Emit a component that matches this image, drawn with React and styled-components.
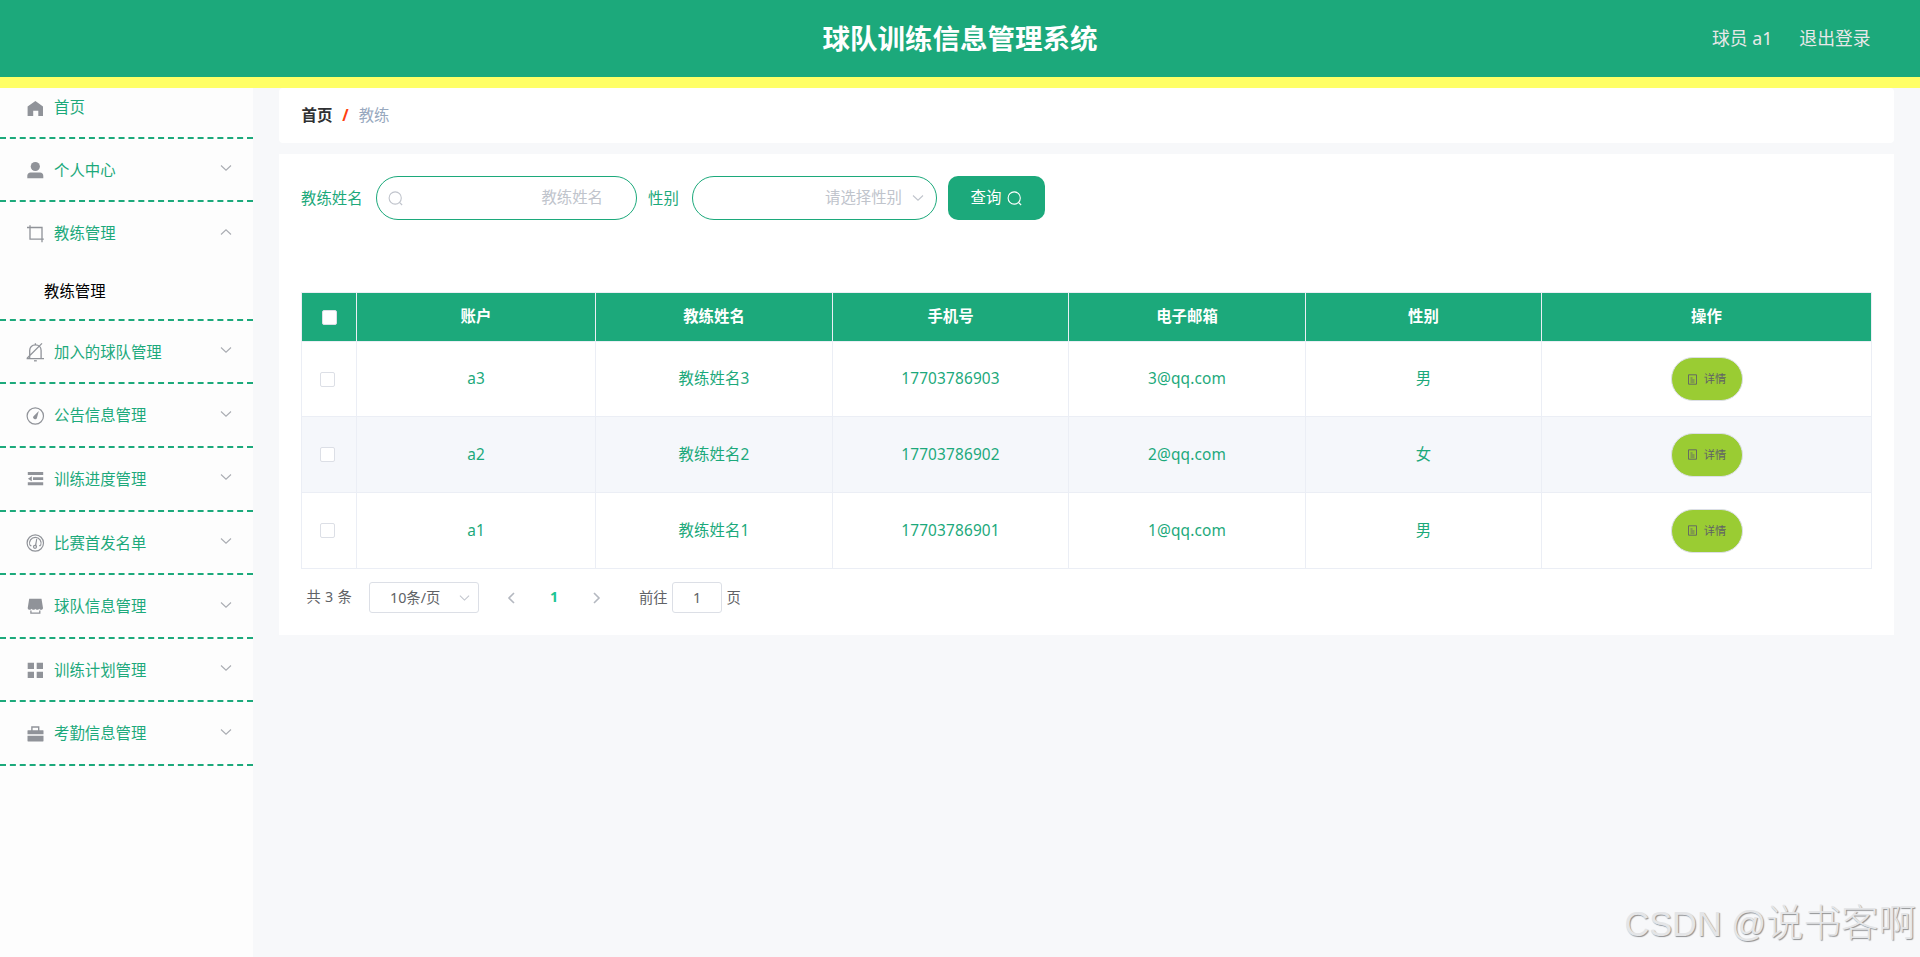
import React from "react";
import styled, { createGlobalStyle } from "styled-components";

const GREEN = "#1ca97b";
const LINE = "#ebeef5";

const GlobalStyle = createGlobalStyle`
  *, *::before, *::after { box-sizing: border-box; }
  body {
    margin: 0;
    background: #f7f8fa;
    font-family: "Noto Sans", "Noto Sans CJK SC", sans-serif;
    font-size: 15.4px;
    color: #606266;
  }
  button, input { font-family: inherit; }
`;

const Page = styled.div`
  display: flex;
  flex-direction: column;
  height: 957px;
  overflow: hidden;
  position: relative;
`;

const Header = styled.header`
  flex: none;
  display: grid;
  grid-template-columns: 1fr auto 1fr;
  align-items: center;
  height: 88px;
  padding: 0 49.5px;
  background: ${GREEN};
  border-bottom: 11px solid #ffff66;
`;

const Title = styled.h1`
  grid-column: 2;
  margin: 1px 0 0;
  font-size: 27.5px;
  line-height: 44px;
  font-weight: 700;
  color: #fff;
`;

const UserLinks = styled.div`
  display: flex;
  justify-content: flex-end;
  gap: 27px;
  padding-bottom: 1px;
  font-size: 17.8px;
  line-height: 30px;
  color: #e8e8e8;
`;

const Body = styled.div`
  flex: 1;
  display: flex;
  min-height: 0;
`;

const Sidebar = styled.nav`
  flex: none;
  width: 253px;
  background: #fdfdfd;
`;

const MenuItem = styled.div`
  border-bottom: 2px dashed ${GREEN};
`;

const MenuRow = styled.div`
  display: flex;
  align-items: center;
  height: ${(p) => (p.$first ? "48.6px" : "61.6px")};
  padding: ${(p) => (p.$first ? "0 22px 9px" : "1.4px 22px 0")};
  color: ${GREEN};
`;

const MenuIcon = styled.svg`
  flex: none;
  width: 20px;
  height: 20px;
  margin: 0 9px 0 3px;
  fill: #909399;
  stroke: none;
`;

const MenuText = styled.span`
  flex: 1;
  padding-top: ${(p) => (p.$first ? 0 : "1.2px")};
  line-height: 22px;
`;

const Arrow = styled.svg`
  flex: none;
  width: ${(p) => p.$w || 12}px;
  height: 8px;
  fill: none;
  stroke: ${(p) => p.$color || "#a9acb2"};
  stroke-width: 1.1;
  transform: ${(p) => (p.$up ? "rotate(180deg)" : "none")};
`;

const MenuArrow = styled(Arrow)`
  margin: -4px -1px 0 0;
`;

const SubItem = styled.div`
  height: 55px;
  padding-left: 44px;
  line-height: 56px;
  color: #000;
`;

const Main = styled.main`
  flex: 1;
  padding: 0 26px;
`;

const Breadcrumb = styled.div`
  display: flex;
  align-items: center;
  height: 55px;
  margin-bottom: 11px;
  padding: 0 22.5px;
  background: #fff;
  border-radius: 4px;
  line-height: 22px;
`;

const CrumbHome = styled.span`
  font-weight: 700;
  color: #303133;
`;

const CrumbSlash = styled.span`
  margin: 0 10px;
  font-weight: 700;
  color: #ff4010;
`;

const CrumbCurrent = styled.span`
  color: #97a8be;
`;

const Card = styled.section`
  height: 481px;
  padding: 22px;
  background: #fff;
`;

const SearchForm = styled.div`
  display: flex;
  align-items: center;
  height: 44px;
  margin-bottom: 72px;
`;

const FieldLabel = styled.label`
  width: ${(p) => p.$w}px;
  padding-top: 1px;
  line-height: 22px;
  color: ${GREEN};
`;

const Field = styled.div`
  display: flex;
  align-items: center;
  justify-content: space-between;
  width: ${(p) => p.$w}px;
  height: 44px;
  margin-right: 11px;
  padding: ${(p) => p.$pad};
  border: 1px solid ${GREEN};
  border-radius: 22px;
`;

const Placeholder = styled.span`
  flex: 1;
  margin-right: ${(p) => p.$gap || 0}px;
  text-align: right;
  line-height: 22px;
  color: #c0c4cc;
`;

const LineIcon = styled.svg`
  flex: none;
  width: ${(p) => p.$size}px;
  height: ${(p) => p.$size}px;
  fill: none;
  stroke: ${(p) => p.$color};
  stroke-width: 1.1;
`;

const QueryButton = styled.button`
  display: flex;
  align-items: center;
  gap: 5.5px;
  width: 97px;
  height: 44px;
  padding: 0 22.5px;
  border: 0;
  border-radius: 10px;
  background: ${GREEN};
  color: #fff;
  font-size: 15.4px;
  line-height: 22px;
`;

const Table = styled.table`
  width: 1571px;
  table-layout: fixed;
  border: 1px solid ${LINE};
  border-bottom: 0;
  border-collapse: separate;
  border-spacing: 0;
`;

const HeadCell = styled.th`
  height: 49px;
  padding: 0;
  background: ${GREEN};
  border-bottom: 1px solid ${LINE};
  border-right: 1px solid ${LINE};
  color: #fff;
  font-weight: 700;
  line-height: 22px;
  &:last-child { border-right: 0; }
`;

const Row = styled.tr`
  height: ${(p) => p.$h}px;
  background: ${(p) => (p.$striped ? "#f5f7fb" : "#fff")};
`;

const Cell = styled.td`
  padding: 0;
  border-bottom: 1px solid ${LINE};
  border-right: 1px solid ${LINE};
  color: ${GREEN};
  text-align: center;
  letter-spacing: 0.15px;
  line-height: 22px;
  &:last-child { border-right: 0; }
`;

const CheckBox = styled.span`
  display: block;
  width: 15px;
  height: 15px;
  margin: ${(p) => (p.$head ? "0 0 0 20px" : "0 0 0 18px")};
  background: #fff;
  border: 1px solid #dcdfe6;
  border-radius: 2px;
`;

const DetailButton = styled.button`
  display: flex;
  align-items: center;
  justify-content: center;
  gap: 6px;
  width: 72px;
  height: 44px;
  margin: 0 0 0 128.5px;
  padding: 0;
  background: #9acc33;
  border: 1px solid #dcdfe6;
  border-radius: 22px;
  color: #606266;
  font-size: 11.2px;
  line-height: 16px;
`;

const Pagination = styled.div`
  display: flex;
  align-items: center;
  height: 31px;
  margin-top: 13px;
  padding-left: 5.5px;
  font-size: 14.3px;
  line-height: 22px;
`;

const Total = styled.span`
  width: 62.5px;
  padding-bottom: 2px;
  word-spacing: 0.6px;
`;

const PageSize = styled.div`
  display: flex;
  align-items: center;
  width: 110px;
  height: 31px;
  padding: 1px 8px 0 20px;
  border: 1px solid #dcdfe6;
  border-radius: 3px;
  justify-content: space-between;
`;

const Pager = styled.div`
  display: flex;
  align-items: center;
  justify-content: space-between;
  width: 96px;
  margin: 0 37px 0 27px;
`;

const CurrentPage = styled.span`
  padding-bottom: 2px;
  font-weight: 700;
  color: #1cc493;
`;

const JumpInput = styled.span`
  width: 50px;
  height: 31px;
  margin: 0 5px 0 4px;
  border: 1px solid #dcdfe6;
  border-radius: 3px;
  text-align: center;
  text-indent: 1px;
  line-height: 29px;
`;

const Watermark = styled.div`
  position: absolute;
  right: 4px;
  bottom: 1px;
  font-family: "Liberation Sans", "Noto Sans CJK SC", sans-serif;
  font-size: 34.3px;
  line-height: 64px;
  white-space: nowrap;
  color: #e4e5e7;
  text-shadow: 1px 1px 1px #8f9092;
`;

const WatermarkName = styled.span`
  font-size: 37.5px;
  font-weight: 300;
`;

const icons = {
  home: <path d="M10.4 2.9 18 8.6V18h-4.7v-5.2H8.2V18H2.6V8.6z" />,
  user: (
    <>
      <circle cx="10.3" cy="6.5" r="4.6" />
      <path d="M2.3 18.3v-2.6c0-2 1.3-3.3 3.3-3.3H15c2 0 3.3 1.3 3.3 3.3v2.6z" />
    </>
  ),
  crop: <path d="M2 3.5H17V18.3M5 1.2V15.1H18.8" fill="none" stroke="#909399" strokeWidth="1.3" />,
  bell: (
    <g fill="none" stroke="#909399" strokeWidth="1.3">
      <path d="M4.7 16.5V8.4c0-3.2 2.3-5.5 5.7-5.500s5.700 2.300 5.700 5.500v8.100M1.600 16.600H19M2.100 16.200 17 1.400M10.400 1.200v1.800" />
      <path d="M9 18.800h2.800" />
    </g>
  ),
  gauge: (
    <>
      <circle cx="10.3" cy="10" r="8.200" fill="none" stroke="#909399" strokeWidth="1.2" />
      <path d="M13.800 4.900 12 11.700a1.900 1.900 0 1 1-3.200-1.800z" />
    </>
  ),
  fold: <path d="M2.800 2.900h15.400v3.100H2.800zM8 8.200h10.200v2.900H8zM2.900 9.700l3.900-2.500v5zM2.800 13.200h15.400v3.100H2.800z" />,
  odometer: (
    <>
      <g fill="none" stroke="#909399" strokeWidth="1.200">
        <circle cx="10.3" cy="10" r="8.200" />
        <path d="M4.900 12.600H6.400M4.900 12.300a5.800 5.800 0 1 1 10.800 0M14.200 12.600h1.500" />
        <circle cx="10" cy="13.800" r="1.500" />
      </g>
      <path d="m11.200 6 1 0-1 7.200-1.400-.3z" />
    </>
  ),
  shop: (
    <>
      <path d="M4.200 1.800h12.300l1.500 9.200c0 1-.8 1.800-1.900 1.800-1 0-1.700-.5-1.900-1-.3.600-1 1-1.900 1s-1.600-.4-1.900-1c-.3.600-1 1-1.900 1s-1.600-.4-1.900-1c-.3.500-1 1-1.900 1-1.200 0-2-.8-2-1.800z" />
      <path d="M5.900 13.500V16.200H14.800V13.500" fill="none" stroke="#909399" strokeWidth="1.300" />
    </>
  ),
  grid: <path d="M2.700 2.700H9v6.300H2.700zM11.700 2.700H18v6.300h-6.300zM2.700 11.700H9V18H2.700zM11.700 11.700H18V18h-6.300z" />,
  suitcase: (
    <path
      fillRule="evenodd"
      d="M6.200 2.300h8.200v3.900H18c.3 0 .5.200.5.500v3.600H2.500V6.700c0-.3.2-.5.500-.5h3.200zM7.600 3.700v2.500H13V3.700zM2.500 11.700h16v5.100c0 .4-.2.600-.5.600H3c-.3 0-.5-.2-.5-.6z"
    />
  ),
};

const menu = [
  { icon: "home", text: "首页" },
  { icon: "user", text: "个人中心" },
  { icon: "crop", text: "教练管理", children: ["教练管理"] },
  { icon: "bell", text: "加入的球队管理" },
  { icon: "gauge", text: "公告信息管理" },
  { icon: "fold", text: "训练进度管理" },
  { icon: "odometer", text: "比赛首发名单" },
  { icon: "shop", text: "球队信息管理" },
  { icon: "grid", text: "训练计划管理" },
  { icon: "suitcase", text: "考勤信息管理" },
];

const columnWidths = [55, 239, 237, 236, 237, 236, 329];
const headers = ["账户", "教练姓名", "手机号", "电子邮箱", "性别", "操作"];
const coaches = [
  { cells: ["a3", "教练姓名3", "17703786903", "3@qq.com", "男"], h: 75 },
  { cells: ["a2", "教练姓名2", "17703786902", "2@qq.com", "女"], h: 76 },
  { cells: ["a1", "教练姓名1", "17703786901", "1@qq.com", "男"], h: 76 },
];

const SearchIcon = ({ color }) => (
  <LineIcon $size={15} $color={color} viewBox="0 0 15 15">
    <circle cx="7.2" cy="7" r="6.1" />
    <path d="m11.5 11.3 2.6 2.7" />
  </LineIcon>
);

const ChevronPath = () => <path d="m1 1.500 5 4.700 5-4.700" />;

export default function App() {
  return (
    <>
      <GlobalStyle />
      <Page>
        <Header>
          <Title>球队训练信息管理系统</Title>
          <UserLinks>
            <span>球员 a1</span>
            <span>退出登录</span>
          </UserLinks>
        </Header>
        <Body>
          <Sidebar>
            {menu.map((item, i) => (
              <MenuItem key={item.text}>
                <MenuRow $first={i === 0}>
                  <MenuIcon viewBox="0 0 20 20">{icons[item.icon]}</MenuIcon>
                  <MenuText $first={i === 0}>{item.text}</MenuText>
                  {i > 0 && (
                    <MenuArrow viewBox="0 0 12 8" $up={Boolean(item.children)}>
                      <ChevronPath />
                    </MenuArrow>
                  )}
                </MenuRow>
                {item.children?.map((child) => (
                  <SubItem key={child}>{child}</SubItem>
                ))}
              </MenuItem>
            ))}
          </Sidebar>
          <Main>
            <Breadcrumb>
              <CrumbHome>首页</CrumbHome>
              <CrumbSlash>/</CrumbSlash>
              <CrumbCurrent>教练</CrumbCurrent>
            </Breadcrumb>
            <Card>
              <SearchForm>
                <FieldLabel $w={75}>教练姓名</FieldLabel>
                <Field $w={261} $pad="0 33px 0 11px">
                  <SearchIcon color="#c0c4cc" />
                  <Placeholder>教练姓名</Placeholder>
                </Field>
                <FieldLabel $w={44}>性别</FieldLabel>
                <Field $w={245} $pad="0 11px 0 33px">
                  <Placeholder $gap={9}>请选择性别</Placeholder>
                  <Arrow viewBox="0 0 12 8" $w={14} $color="#c0c4cc">
                    <ChevronPath />
                  </Arrow>
                </Field>
                <QueryButton>
                  <span>查询</span>
                  <SearchIcon color="#fff" />
                </QueryButton>
              </SearchForm>
              <Table>
                <colgroup>
                  {columnWidths.map((w, i) => (
                    <col key={i} width={w} />
                  ))}
                </colgroup>
                <thead>
                  <tr>
                    <HeadCell>
                      <CheckBox $head />
                    </HeadCell>
                    {headers.map((h) => (
                      <HeadCell key={h}>{h}</HeadCell>
                    ))}
                  </tr>
                </thead>
                <tbody>
                  {coaches.map((coach, i) => (
                    <Row key={coach.cells[0]} $h={coach.h} $striped={i % 2 === 1}>
                      <Cell>
                        <CheckBox />
                      </Cell>
                      {coach.cells.map((c) => (
                        <Cell key={c}>{c}</Cell>
                      ))}
                      <Cell>
                        <DetailButton>
                          <LineIcon $size={11} $color="#606266" viewBox="0 0 11 11">
                            <path d="M1.5.8h8v9.4h-8zM3.5 4h2M3.5 6h4M3.5 8h4" strokeWidth="0.9" />
                          </LineIcon>
                          <span>详情</span>
                        </DetailButton>
                      </Cell>
                    </Row>
                  ))}
                </tbody>
              </Table>
              <Pagination>
                <Total>共 3 条</Total>
                <PageSize>
                  <span>10条/页</span>
                  <Arrow viewBox="0 0 12 8" $w={11} $color="#c0c4cc">
                    <ChevronPath />
                  </Arrow>
                </PageSize>
                <Pager>
                  <LineIcon $size={12} $color="#b4b8c0" viewBox="0 0 12 12">
                    <path d="M8 1 3 6l5 5" strokeWidth="1.6" />
                  </LineIcon>
                  <CurrentPage>1</CurrentPage>
                  <LineIcon $size={12} $color="#b4b8c0" viewBox="0 0 12 12">
                    <path d="m4 1 5 5-5 5" strokeWidth="1.6" />
                  </LineIcon>
                </Pager>
                <span>前往</span>
                <JumpInput>1</JumpInput>
                <span>页</span>
              </Pagination>
            </Card>
          </Main>
        </Body>
        <Watermark>
          CSDN @<WatermarkName>说书客啊</WatermarkName>
        </Watermark>
      </Page>
    </>
  );
}
